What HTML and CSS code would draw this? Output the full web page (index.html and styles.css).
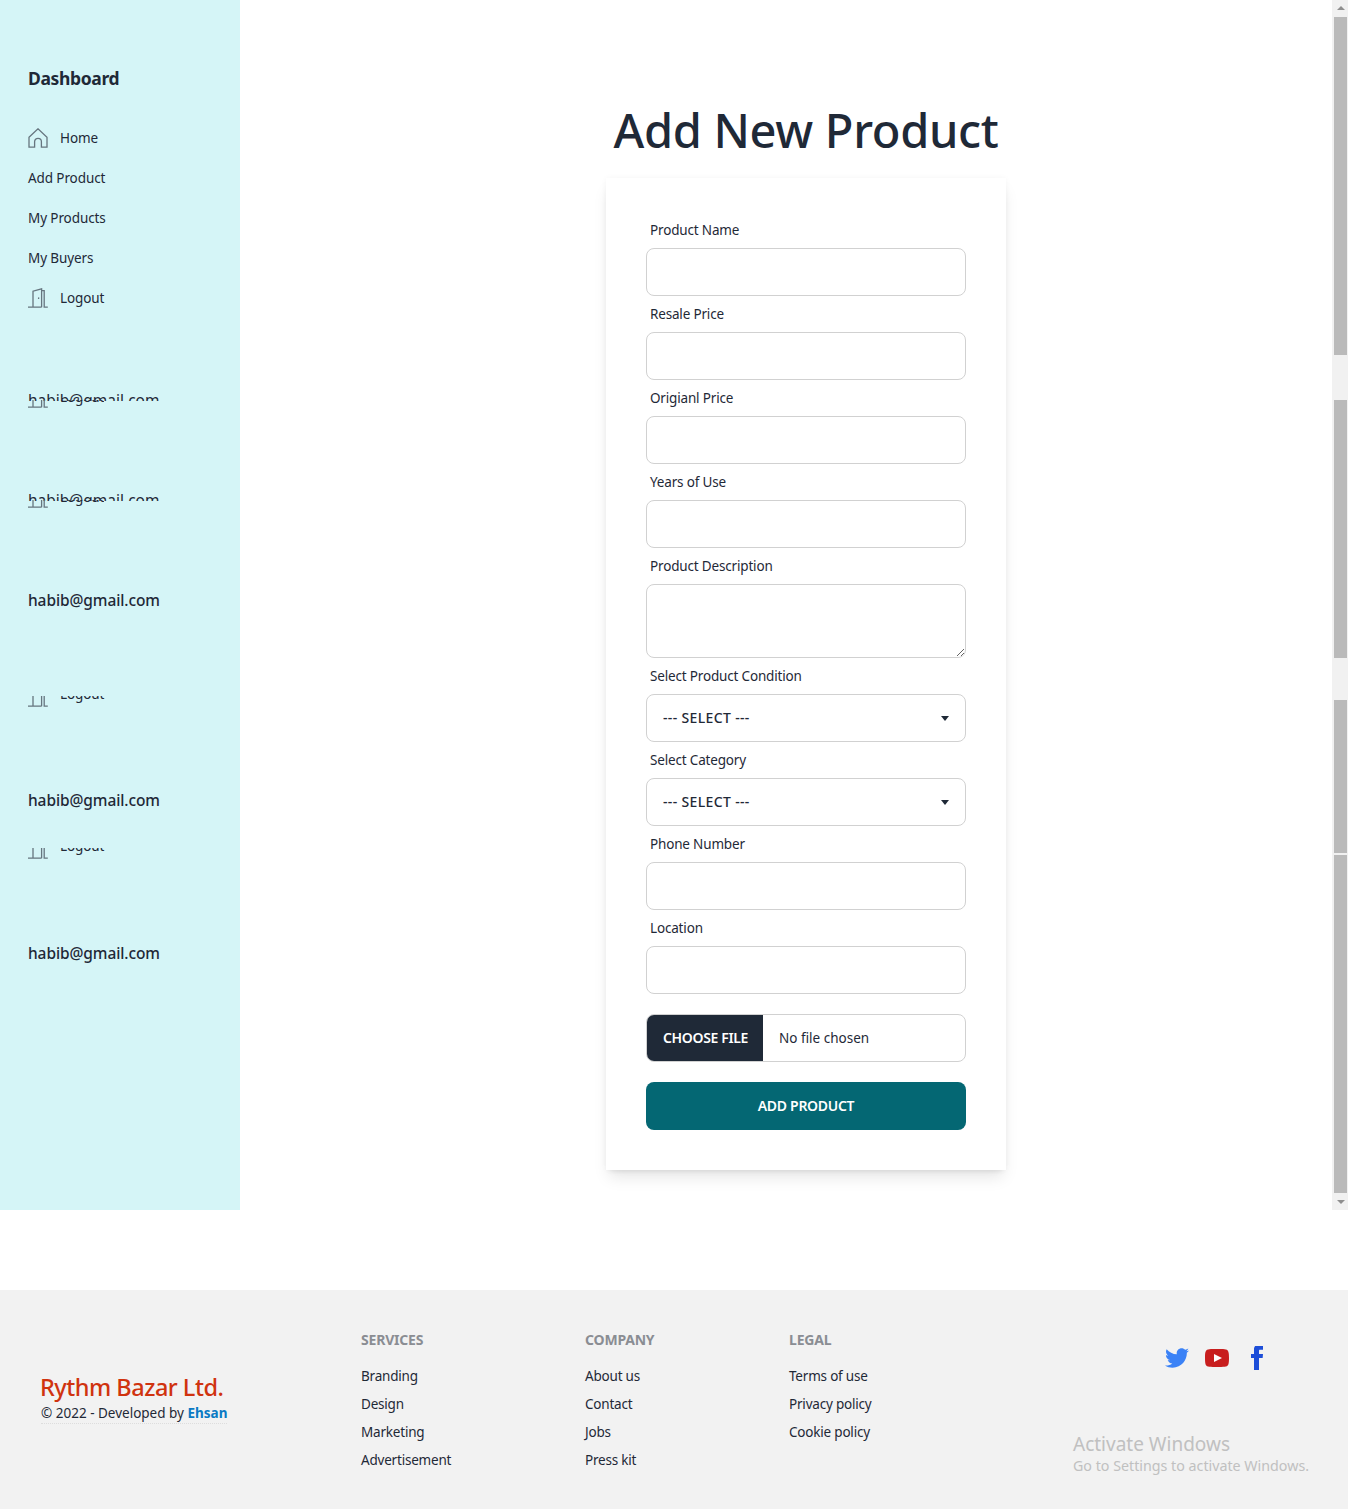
FILE: index.html
```html
<!DOCTYPE html>
<html lang="en">
<head>
  <meta charset="UTF-8">
  <title>Add New Product</title>
  <link rel="stylesheet" href="styles.css">
</head>
<body>

  <div class="layout">
    <!-- sidebar -->
    <aside class="sidebar">
      <h2 class="side-title">Dashboard</h2>
      <ul class="menu">
        <li class="menu-item">
          <svg class="menu-icon" viewBox="0 0 20 20" fill="none"><path d="M1 9.2 10 .8l9 8.4v9.9h-5.6v-5.4a3.4 3.4 0 0 0-6.8 0v5.4H1z"/></svg>
          Home
        </li>
        <li class="menu-item">Add Product</li>
        <li class="menu-item">My Products</li>
        <li class="menu-item">My Buyers</li>
        <li class="menu-item">
          <svg class="menu-icon" viewBox="0 0 20 20" fill="none"><path d="M0 19.2h5.2M5 19.2V3.2L13.6.8v18.4M5 19.2l8.6 0M13.6 2.6h2.6v16.6h3.6"/><path d="M10.6 9.4v1.6"/></svg>
          Logout
        </li>
      </ul>

      <!-- the rows below were captured torn, only pieces of them show -->
      <div class="torn torn-first">
        <span class="torn-mail">habib@gmail.com</span>
        <div class="logout-end logout-end-low">
          <svg class="menu-icon" viewBox="0 0 20 20" fill="none"><path d="M0 19.2h5.2M5 19.2V3.2L13.6.8v18.4M5 19.2l8.6 0M13.6 2.6h2.6v16.6h3.6"/></svg>
          <span>Logout</span>
        </div>
      </div>
      <div class="torn torn-second">
        <span class="torn-mail">habib@gmail.com</span>
        <div class="logout-end logout-end-low">
          <svg class="menu-icon" viewBox="0 0 20 20" fill="none"><path d="M0 19.2h5.2M5 19.2V3.2L13.6.8v18.4M5 19.2l8.6 0M13.6 2.6h2.6v16.6h3.6"/></svg>
          <span>Logout</span>
        </div>
      </div>

      <p class="mail mail-a">habib@gmail.com</p>
      <div class="logout-end logout-end-a">
        <svg class="menu-icon" viewBox="0 0 20 20" fill="none"><path d="M0 19.2h5.2M5 19.2V3.2L13.6.8v18.4M5 19.2l8.6 0M13.6 2.6h2.6v16.6h3.6"/></svg>
        <span>Logout</span>
      </div>
      <p class="mail mail-b">habib@gmail.com</p>
      <div class="logout-end logout-end-b">
        <svg class="menu-icon" viewBox="0 0 20 20" fill="none"><path d="M0 19.2h5.2M5 19.2V3.2L13.6.8v18.4M5 19.2l8.6 0M13.6 2.6h2.6v16.6h3.6"/></svg>
        <span>Logout</span>
      </div>
      <p class="mail mail-c">habib@gmail.com</p>
    </aside>

    <!-- form -->
    <main class="content">
      <h1 class="page-title">Add New Product</h1>
      <form class="card">
        <label class="field-label" for="name">Product Name</label>
        <input class="field" type="text" id="name">

        <label class="field-label" for="resale">Resale Price</label>
        <input class="field" type="text" id="resale">

        <label class="field-label" for="original">Origianl Price</label>
        <input class="field" type="text" id="original">

        <label class="field-label" for="years">Years of Use</label>
        <input class="field" type="text" id="years">

        <label class="field-label" for="description">Product Description</label>
        <textarea class="field field-area" id="description"></textarea>

        <label class="field-label" for="condition">Select Product Condition</label>
        <div class="select-wrap">
          <select class="field field-select" id="condition">
            <option>--- SELECT ---</option>
          </select>
        </div>

        <label class="field-label" for="category">Select Category</label>
        <div class="select-wrap">
          <select class="field field-select" id="category">
            <option>--- SELECT ---</option>
          </select>
        </div>

        <label class="field-label" for="phone">Phone Number</label>
        <input class="field" type="text" id="phone">

        <label class="field-label" for="location">Location</label>
        <input class="field" type="text" id="location">

        <input class="file-field" type="file">
        <button class="submit-btn" type="button">Add Product</button>
      </form>
    </main>

    <!-- scrollbar -->
    <div class="scrollbar">
      <span class="arrow arrow-up"></span>
      <div class="thumb thumb-a"></div>
      <div class="thumb thumb-b"></div>
      <div class="thumb thumb-c"></div>
      <div class="thumb thumb-d"></div>
      <span class="arrow arrow-down"></span>
    </div>
  </div>

  <footer class="footer">
    <div class="brand">
      <p class="brand-name">Rythm Bazar Ltd.</p>
      <p class="brand-copy">© 2022 - Developed by <a class="brand-link" href="#">Ehsan</a></p>
    </div>
    <div class="foot-col">
      <span class="foot-title">Services</span>
      <a href="#">Branding</a>
      <a href="#">Design</a>
      <a href="#">Marketing</a>
      <a href="#">Advertisement</a>
    </div>
    <div class="foot-col">
      <span class="foot-title">Company</span>
      <a href="#">About us</a>
      <a href="#">Contact</a>
      <a href="#">Jobs</a>
      <a href="#">Press kit</a>
    </div>
    <div class="foot-col">
      <span class="foot-title">Legal</span>
      <a href="#">Terms of use</a>
      <a href="#">Privacy policy</a>
      <a href="#">Cookie policy</a>
    </div>
    <div class="socials">
      <svg class="social twitter" viewBox="0 0 24 24"><path d="M24 4.557c-.883.392-1.832.656-2.828.775 1.017-.609 1.798-1.574 2.165-2.724-.951.564-2.005.974-3.127 1.195-.897-.957-2.178-1.555-3.594-1.555-3.179 0-5.515 2.966-4.797 6.045-4.091-.205-7.719-2.165-10.148-5.144-1.29 2.213-.669 5.108 1.523 6.574-.806-.026-1.566-.247-2.229-.616-.054 2.281 1.581 4.415 3.949 4.89-.693.188-1.452.232-2.224.084.626 1.956 2.444 3.379 4.6 3.419-2.07 1.623-4.678 2.348-7.29 2.04 2.179 1.397 4.768 2.212 7.548 2.212 9.142 0 14.307-7.721 14.307-14.417 0-.205-.005-.411-.014-.615.962-.695 1.797-1.562 2.457-2.549z"/></svg>
      <svg class="social youtube" viewBox="0 0 24 24"><polygon class="youtube-play" points="8,7 18,12 8,17"/><path d="M19.615 3.184c-3.604-.246-11.631-.245-15.23 0-3.897.266-4.356 2.62-4.385 8.816.029 6.185.484 8.549 4.385 8.816 3.6.245 11.626.246 15.23 0 3.897-.266 4.356-2.62 4.385-8.816-.029-6.185-.484-8.549-4.385-8.816zm-10.615 12.816v-8l8 3.993-8 4.007z"/></svg>
      <svg class="social facebook" viewBox="0 0 24 24"><path d="M9 8h-3v4h3v12h5v-12h3.642l.358-4h-4v-2.916c0-.955.192-1.333 1.115-1.333h2.885v-5h-3.808c-3.596 0-5.192 1.583-5.192 4.615v3.385z"/></svg>
    </div>
    <div class="watermark">
      <div class="watermark-big">Activate Windows</div>
      <div>Go to Settings to activate Windows.</div>
    </div>
  </footer>

</body>
</html>
```

FILE: styles.css
```css
* {
  box-sizing: border-box;
}

body {
  margin: 0;
  font-family: "Noto Sans", "Open Sans", Arial, sans-serif;
  font-size: 13.5px;
  line-height: 20px;
  color: #1f2937;
  background-color: #ffffff;
}

.layout {
  display: flex;
  height: 1210px;
  margin-bottom: 80px;
}

/* sidebar */
.sidebar {
  width: 240px;
  flex-shrink: 0;
  padding: 65px 0 0 28px;
  background-color: #d5f5f7;
}

.side-title {
  margin: 0 0 27px;
  font-size: 17.5px;
  line-height: 26px;
  font-weight: 700;
  letter-spacing: -0.35px;
}

.menu {
  list-style: none;
  margin: 0;
  padding: 0;
}

.menu-item {
  display: flex;
  align-items: center;
  gap: 12px;
  height: 40px;
  letter-spacing: -0.1px;
}

.menu-icon {
  width: 20px;
  height: 20px;
  flex-shrink: 0;
  stroke: #66757f;
  stroke-width: 1.3;
}

.torn {
  position: relative;
  height: 16px;
}

.torn-first {
  margin-top: 75px;
}

.torn-second {
  margin-top: 84px;
}

.torn-mail {
  position: absolute;
  top: 0;
  left: 0;
  height: 8px;
  overflow: hidden;
  font-size: 15.5px;
  line-height: 14px;
  white-space: nowrap;
}

.logout-end {
  position: relative;
  display: flex;
  align-items: flex-end;
  gap: 12px;
  overflow: hidden;
  letter-spacing: -0.1px;
}

.logout-end span {
  margin-bottom: 3px;
}

.logout-end-low {
  position: absolute;
  top: 7px;
  left: 0;
  height: 8px;
}

.logout-end-low span {
  margin-bottom: 1px;
}

.mail {
  margin: 0;
  font-size: 15.5px;
  line-height: 22px;
  font-weight: 500;
  letter-spacing: -0.1px;
}

.mail-a {
  margin-top: 80px;
}

.logout-end-a {
  height: 11px;
  margin-top: 85px;
}

.mail-b {
  margin-top: 82px;
}

.logout-end-b {
  height: 11px;
  margin-top: 37px;
}

.mail-c {
  margin-top: 83px;
}

/* main column */
.content {
  flex: 1;
  padding: 99px 0 0 40px;
  display: flex;
  flex-direction: column;
  align-items: center;
}

.page-title {
  margin: 0;
  font-size: 47px;
  line-height: 62px;
  font-weight: 500;
  letter-spacing: -0.33px;
  white-space: nowrap;
}

.card {
  display: flex;
  flex-direction: column;
  width: 400px;
  height: 992px;
  margin-top: 17px;
  padding: 34px 40px 40px;
  background-color: #ffffff;
  box-shadow: 0 10px 15px -3px rgba(0, 0, 0, 0.1), 0 4px 6px -4px rgba(0, 0, 0, 0.1), 0 0 6px rgba(0, 0, 0, 0.04);
}

.field-label {
  display: block;
  height: 36px;
  padding: 8px 4px;
  letter-spacing: -0.17px;
}

.field {
  display: block;
  width: 100%;
  height: 48px;
  padding: 0 16px;
  font-family: inherit;
  font-size: 14px;
  color: #1f2937;
  background-color: #ffffff;
  border: 1px solid #d1d1d1;
  border-radius: 8px;
  outline: none;
}

.field-area {
  height: 74px;
  padding: 8px 16px;
}

.select-wrap {
  position: relative;
}

.select-wrap::after {
  content: "";
  position: absolute;
  top: 22px;
  right: 17px;
  border-top: 5px solid #1f2937;
  border-left: 4px solid transparent;
  border-right: 4px solid transparent;
  pointer-events: none;
}

.field-select {
  appearance: none;
  padding-bottom: 2px;
  font-weight: 500;
  letter-spacing: 0.35px;
}

.file-field {
  display: block;
  width: 100%;
  height: 48px;
  margin-top: 20px;
  padding: 0;
  font-family: inherit;
  font-size: 13.5px;
  line-height: 44px;
  color: #1f2937;
  background-color: #ffffff;
  border: 1px solid #d1d1d1;
  border-radius: 8px;
}

.file-field::file-selector-button {
  height: 46px;
  margin-right: 16px;
  padding: 0 15px 2px 16px;
  font-family: inherit;
  font-size: 14px;
  font-weight: 600;
  letter-spacing: -0.35px;
  text-transform: uppercase;
  color: #ffffff;
  background-color: #1f2937;
  border: none;
}

.submit-btn {
  height: 48px;
  margin-top: 20px;
  padding-bottom: 2px;
  font-family: inherit;
  font-size: 14px;
  font-weight: 600;
  letter-spacing: -0.3px;
  text-transform: uppercase;
  color: #ffffff;
  background-color: #046773;
  border: none;
  border-radius: 8px;
}

/* scrollbar */
.scrollbar {
  position: relative;
  display: flex;
  flex-direction: column;
  width: 16px;
  flex-shrink: 0;
  padding-left: 2px;
  background-color: #f1f1f1;
}

.thumb {
  width: 13px;
  background-color: #bababa;
}

.thumb-a {
  height: 338px;
  margin-top: 17px;
}

.thumb-b {
  height: 258px;
  margin-top: 45px;
}

.thumb-c {
  height: 153px;
  margin-top: 42px;
}

.thumb-d {
  height: 338px;
  margin-top: 2px;
}

.arrow {
  position: absolute;
  left: 5px;
  border-left: 4px solid transparent;
  border-right: 4px solid transparent;
}

.arrow-up {
  top: 6px;
  border-bottom: 4px solid #8f8f8f;
}

.arrow-down {
  bottom: 6px;
  border-top: 4px solid #8f8f8f;
}

/* footer */
.footer {
  position: relative;
  display: grid;
  grid-template-columns: 321px 224px 204px 204px 1fr;
  height: 219px;
  padding: 40px 0 0 40px;
  background-color: #f2f2f2;
}

.brand {
  padding-top: 42px;
}

.brand-name {
  margin: 0;
  font-size: 23.5px;
  line-height: 31px;
  font-weight: 500;
  letter-spacing: -0.5px;
  color: #d0330f;
}

.brand-copy {
  display: inline-block;
  margin: -1px 0 0 1px;
  border-bottom: 1px dotted #dddddd;
}

.brand-link {
  font-weight: 700;
  color: #0b7ac4;
  text-decoration: none;
}

.foot-col {
  display: flex;
  flex-direction: column;
  align-items: flex-start;
  gap: 8px;
}

.foot-col a {
  color: #1f2937;
  text-decoration: none;
  letter-spacing: -0.2px;
}

.foot-title {
  margin-bottom: 8px;
  font-size: 14px;
  font-weight: 700;
  letter-spacing: -0.2px;
  text-transform: uppercase;
  color: #8a8d93;
}

.socials {
  display: flex;
  justify-content: flex-end;
  align-items: flex-start;
  gap: 16px;
  padding: 16px 79px 0 0;
}

.social {
  width: 24px;
  height: 24px;
}

.twitter {
  fill: #3b82f6;
}

.youtube {
  fill: #c81e1e;
}

.youtube-play {
  fill: #ffffff;
}

.facebook {
  fill: #1d4ed8;
}

.watermark {
  position: absolute;
  top: 142px;
  left: 1073px;
  font-size: 14.25px;
  color: #c0c0c0;
  white-space: nowrap;
}

.watermark-big {
  font-size: 19px;
  line-height: 24px;
}
```
